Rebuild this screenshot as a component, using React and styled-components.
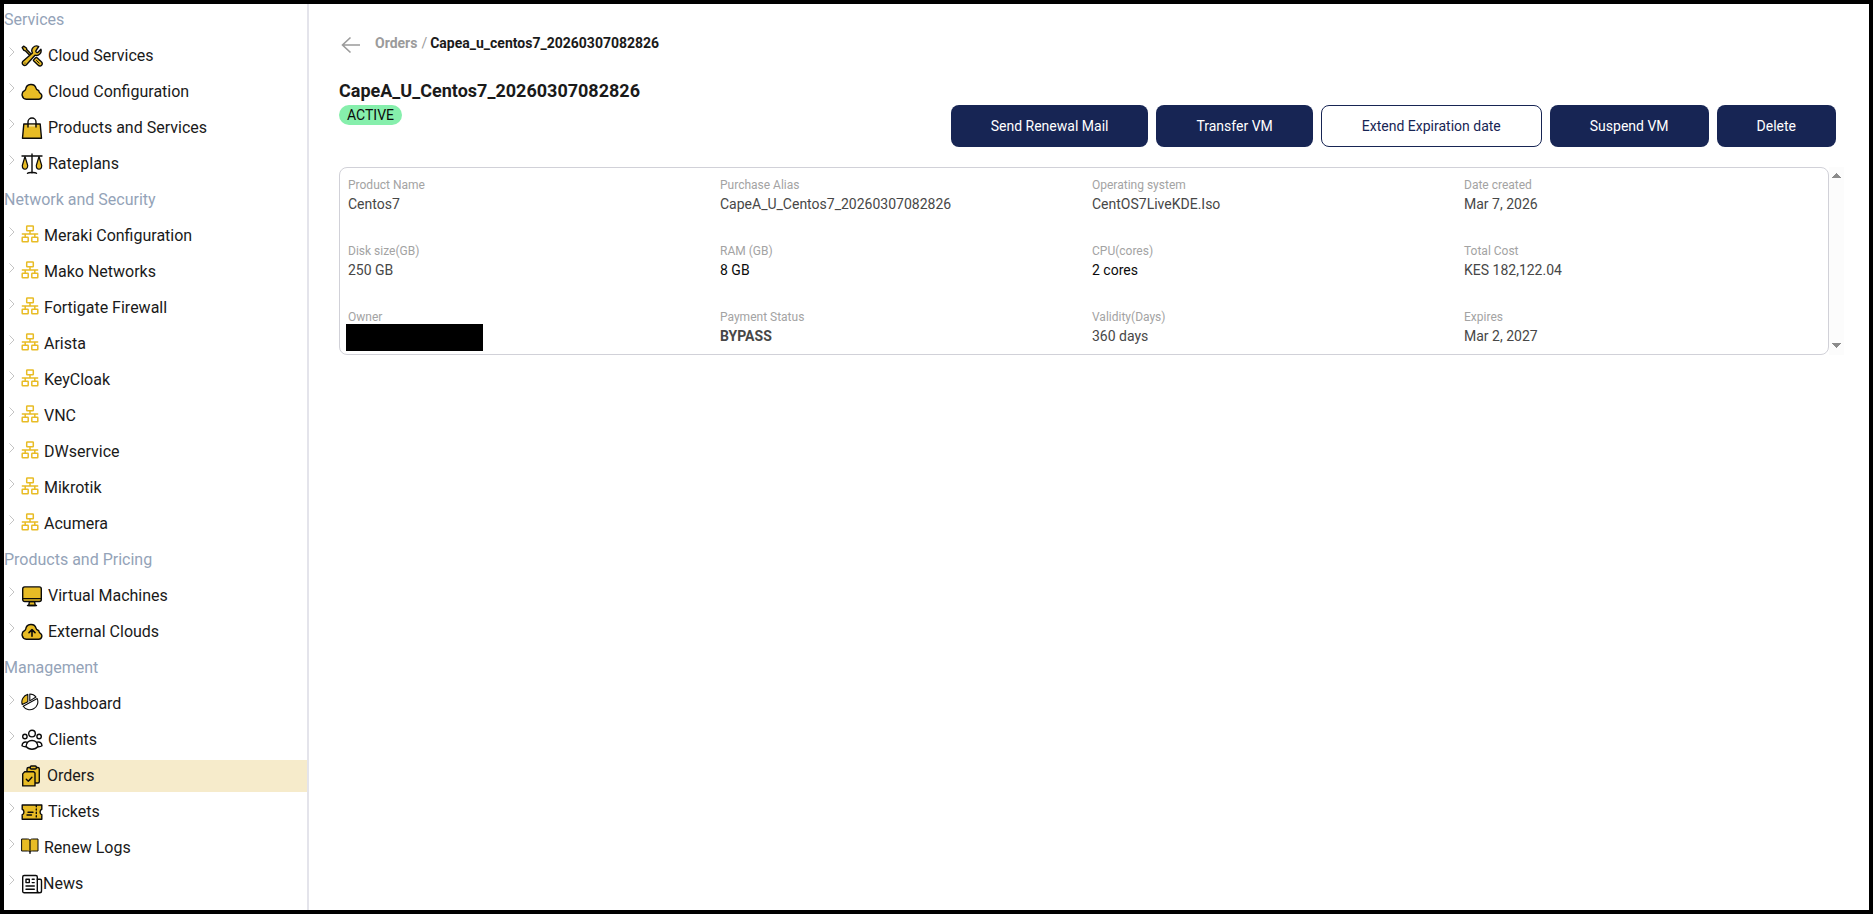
import styled, { createGlobalStyle } from 'styled-components';

const INK = '#0b0b0b';
const GOLD = '#e8bc25';

const outline = {
  stroke: INK,
  strokeWidth: 1.4,
  strokeLinecap: 'round',
  strokeLinejoin: 'round',
};

const ToolsIcon = () => (
  <Icon viewBox="0 0 22 22" $size={22}>
    <path d="M1.2 2.6 2.6 1.2 5.4 3l.3 1.5L12 11l-1.4 1.3L4.3 5.8 2.9 5.4z" fill={GOLD} {...outline} />
    <path
      d="M12.6 14.9l2-2.2c.5-.4 1-.3 1.5.1l4.2 3.9c1.2 1.1 1.3 2.6.3 3.6s-2.5.9-3.6-.2l-4.2-4.1c-.4-.4-.5-.8-.2-1.1z"
      fill={GOLD}
      {...outline}
    />
    <path
      d="M15 5.7a1 1 0 0 0 .1 1.2l.4.4a1 1 0 0 0 1.3.1L19.9 4.3A4.7 4.7 0 0 1 14 10.2L5.2 20A2.5 2.5 0 0 1 1.7 16.6L11.4 7.9A4.7 4.7 0 0 1 17.7 1.5z"
      fill={GOLD}
      {...outline}
    />
    <path d="M15.5 15.5l2.7 2.6" {...outline} strokeWidth={1} />
    <circle cx="4" cy="18" r="0.6" fill={INK} />
  </Icon>
);

const cloudPath =
  'M5.3 18.3a4.6 4.6 0 0 1-1.8-8.6C4 9.4 4.5 9.2 4.7 8.2a5.3 5.3 0 0 1 10.4-.8c.3 1.1.6 1.4 1.6 1.6.9.3 1.4 1 1.5 1.9.1.7.3.9.9 1.2a3.3 3.3 0 0 1-1.4 6.2z';

const CloudIcon = () => (
  <Icon viewBox="0 0 22 22" $size={22}>
    <path d={cloudPath} fill={GOLD} {...outline} />
  </Icon>
);

const CloudUploadIcon = () => (
  <Icon viewBox="0 0 22 22" $size={22}>
    <path d={cloudPath} fill={GOLD} {...outline} />
    <path d="M11 15.3V9M8 11.6l3-2.9 3 2.9" fill="none" {...outline} strokeWidth={1.6} />
  </Icon>
);

const BagIcon = () => (
  <Icon viewBox="0 0 22 22" $size={22}>
    <path d="M2.8 7h16.4l1.3 14.2h-19z" fill={GOLD} {...outline} />
    <path d="M7.7 7.7h6.6v1.8H7.7z" fill="#f6e3a0" />
    <path d="M7 10V5a4 4 0 0 1 8 0v5" fill="none" {...outline} />
  </Icon>
);

const ScalesIcon = () => (
  <Icon viewBox="0 0 22 22" $size={22}>
    <path d="M1 3h20M11 1v19M6.5 20.2c1-.8 2.5-.7 4.5-.7s3.5-.1 4.5.7" fill="none" {...outline} />
    <path d="M4 3.5l-2.7 9c0 2.4 1.2 3.7 2.7 3.7s2.7-1.3 2.7-3.7z" fill={GOLD} {...outline} strokeWidth={1.2} />
    <path d="M18 3.5l-2.7 9c0 2.4 1.2 3.7 2.7 3.7s2.7-1.3 2.7-3.7z" fill={GOLD} {...outline} strokeWidth={1.2} />
  </Icon>
);

const NetworkIcon = () => (
  <Icon viewBox="0 0 18 18" $size={18}>
    <g fill="none" stroke={GOLD} strokeWidth="1.5">
      <rect x="5.7" y="1" width="6.6" height="4.7" rx="0.5" />
      <rect x="1.2" y="12.3" width="6" height="4.5" rx="0.5" />
      <rect x="10.8" y="12.3" width="6" height="4.5" rx="0.5" />
      <path d="M9 5.7V9M.8 9h16.4M4.2 9v3.3M13.8 9v3.3" />
    </g>
  </Icon>
);

const MonitorIcon = () => (
  <Icon viewBox="0 0 22 22" $size={22}>
    <path d="M8.5 16.5h5l.8 4H7.7z" fill={GOLD} {...outline} />
    <rect x="1.7" y="1.9" width="18.6" height="14.6" rx="2" fill={GOLD} {...outline} />
    <path d="M1.7 13.6h18.6M6.5 20.5h9" {...outline} />
  </Icon>
);

const PieIcon = () => (
  <Icon viewBox="0 0 18 18" $size={18}>
    <g stroke={INK} strokeWidth="1.1" strokeLinejoin="round" fill="#fff">
      <path d="M6.8 1.4v7.3L1.2 11.5A8 8 0 0 1 6.8 1.4z" fill={GOLD} />
      <path d="M8.8 1a8 8 0 0 1 6.2 3L8.8 7.9z" />
      <path d="M16.2 5.600A8 8 0 0 1 2.2 13.2z" />
    </g>
  </Icon>
);

const ClientsIcon = () => (
  <Icon viewBox="0 0 22 22" $size={22}>
    <g fill="none" {...outline}>
      <circle cx="11" cy="4.6" r="3.3" />
      <circle cx="3.9" cy="7.5" r="2.2" />
      <circle cx="18.1" cy="7.5" r="2.2" />
      <path d="M5 17.5c.4-3.6 2.6-6 6-6s5.6 2.4 6 6c-1.5 1.8-3.5 2.7-6 2.7s-4.5-.9-6-2.7z" />
      <path d="M5.8 13.2c-2.7-.8-4.6.7-4.8 3.5.9.7 2 1 3.5 1M16.2 13.2c2.7-.8 4.6.7 4.8 3.5-.9.7-2 1-3.5 1" />
    </g>
  </Icon>
);

const OrdersIcon = () => (
  <Icon viewBox="0 0 21 22" $size={21}>
    <rect x="6" y="2.5" width="12.3" height="15.5" rx="1.5" fill={GOLD} {...outline} />
    <rect x="9.3" y="1" width="6" height="3" rx="1" fill={GOLD} {...outline} />
    <path d="M3.7 6.7h9L14 7.9v13H1.7v-12z" fill={GOLD} {...outline} />
    <path d="M5.3 14.2l2 2 3.6-4" fill="none" {...outline} />
  </Icon>
);

const TicketIcon = () => (
  <Icon viewBox="0 0 22 22" $size={22}>
    <path
      d="M1.2 4h19.6v4.2c-2.3.6-2.3 5 0 5.6v4.4H1.2v-4.4c2.3-.6 2.3-5 0-5.6z"
      fill={GOLD}
      {...outline}
    />
    <path d="M15.3 4.5V18" {...outline} strokeDasharray="1.2 2.2" fill="none" />
    <path d="M7 11.2h5M6 14h4.5" fill="none" {...outline} />
  </Icon>
);

const BookIcon = () => (
  <Icon viewBox="0 0 18 18" $size={18}>
    <path
      d="M1 2h5.5C8 2 9 2.6 9 3.5 9 2.6 10 2 11.5 2H17v12h-5.5c-1.5 0-2.5.5-2.5 1.3 0-.8-1-1.3-2.5-1.3H1z"
      fill={GOLD}
      {...outline}
      strokeWidth={1}
    />
    <path d="M9 3.5v13" {...outline} strokeWidth={1.2} />
  </Icon>
);

const NewsIcon = () => (
  <Icon viewBox="0 0 22 22" $size={22} $flush>
    <g fill="none" {...outline}>
      <path d="M3.2 2.5h11.6A1.5 1.5 0 0 1 16.3 4v14.5c0 1 .8 1.3 1.3 1.3H3.2a1.5 1.5 0 0 1-1.5-1.3V4a1.5 1.5 0 0 1 1.5-1.5z" />
      <path d="M16.3 6.3H19a1.5 1.5 0 0 1 1.5 1.5V18c0 2.4-3.6 2.4-4 0" />
      <path d="M5 6.3h3.3v3.3H5zM11.2 6.3h2M11.2 9.6h2M5 13h8.3M5 16.2h8.3" />
    </g>
  </Icon>
);

const menu = [
  {
    title: 'Services',
    items: [
      { name: 'Cloud Services', icon: ToolsIcon },
      { name: 'Cloud Configuration', icon: CloudIcon },
      { name: 'Products and Services', icon: BagIcon },
      { name: 'Rateplans', icon: ScalesIcon },
    ],
  },
  {
    title: 'Network and Security',
    items: [
      { name: 'Meraki Configuration', icon: NetworkIcon },
      { name: 'Mako Networks', icon: NetworkIcon },
      { name: 'Fortigate Firewall', icon: NetworkIcon },
      { name: 'Arista', icon: NetworkIcon },
      { name: 'KeyCloak', icon: NetworkIcon },
      { name: 'VNC', icon: NetworkIcon },
      { name: 'DWservice', icon: NetworkIcon },
      { name: 'Mikrotik', icon: NetworkIcon },
      { name: 'Acumera', icon: NetworkIcon },
    ],
  },
  {
    title: 'Products and Pricing',
    items: [
      { name: 'Virtual Machines', icon: MonitorIcon },
      { name: 'External Clouds', icon: CloudUploadIcon },
    ],
  },
  {
    title: 'Management',
    items: [
      { name: 'Dashboard', icon: PieIcon },
      { name: 'Clients', icon: ClientsIcon },
      { name: 'Orders', icon: OrdersIcon, active: true },
      { name: 'Tickets', icon: TicketIcon },
      { name: 'Renew Logs', icon: BookIcon },
      { name: 'News', icon: NewsIcon },
    ],
  },
];

const details = [
  { label: 'Product Name', value: 'Centos7' },
  { label: 'Purchase Alias', value: 'CapeA_U_Centos7_20260307082826' },
  { label: 'Operating system', value: 'CentOS7LiveKDE.Iso' },
  { label: 'Date created', value: 'Mar 7, 2026' },
  { label: 'Disk size(GB)', value: '250 GB' },
  { label: 'RAM (GB)', value: '8 GB', dark: true },
  { label: 'CPU(cores)', value: '2 cores', dark: true },
  { label: 'Total Cost', value: 'KES 182,122.04' },
  { label: 'Owner', hidden: true },
  { label: 'Payment Status', value: 'BYPASS', bold: true },
  { label: 'Validity(Days)', value: '360 days' },
  { label: 'Expires', value: 'Mar 2, 2027' },
];

const Sidebar = () => (
  <Aside>
    <nav>
      {menu.map((section) => (
        <section key={section.title}>
          <SectionTitle>{section.title}</SectionTitle>
          {section.items.map(({ name, icon: ItemIcon, active }) => (
            <NavItem key={name} href="#" $active={active}>
              <Chevron viewBox="0 0 8 12">
                {!active && <path d="M1.5 1.5 6 6l-4.5 4.5" />}
              </Chevron>
              <ItemIcon />
              {name}
            </NavItem>
          ))}
        </section>
      ))}
    </nav>
  </Aside>
);

const Details = () => (
  <DetailsWrap>
    <Card>
      {details.map(({ label, value, dark, bold, hidden }) => (
        <div key={label}>
          <Term>{label}</Term>
          {hidden ? (
            <Redacted />
          ) : (
            <Value $dark={dark} $bold={bold}>
              {value}
            </Value>
          )}
        </div>
      ))}
    </Card>
    <ScrollTrack>
      <svg width="9" height="5" viewBox="0 0 9 5">
        <path d="M0 5 4.5 0 9 5z" />
      </svg>
      <svg width="9" height="5" viewBox="0 0 9 5">
        <path d="M0 0h9L4.5 5z" />
      </svg>
    </ScrollTrack>
  </DetailsWrap>
);

export default function App() {
  return (
    <>
      <GlobalStyle />
      <Page>
        <Sidebar />
        <Main>
          <Breadcrumb>
            <BackButton type="button" aria-label="Back">
              <svg width="20" height="18" viewBox="0 0 20 18">
                <path d="M9.5 1.5 1.5 9l8 7.5M1.5 9H19" />
              </svg>
            </BackButton>
            <Crumb href="#">Orders</Crumb>
            <Slash>/</Slash>
            <Current>Capea_u_centos7_20260307082826</Current>
          </Breadcrumb>

          <Title>CapeA_U_Centos7_20260307082826</Title>
          <Toolbar>
            <Badge>ACTIVE</Badge>
            <Actions>
              <Button type="button">Send Renewal Mail</Button>
              <Button type="button">Transfer VM</Button>
              <Button type="button" $outlined>
                Extend Expiration date
              </Button>
              <Button type="button">Suspend VM</Button>
              <Button type="button">Delete</Button>
            </Actions>
          </Toolbar>
          <Details />
        </Main>
      </Page>
    </>
  );
}

const GlobalStyle = createGlobalStyle`
  * {
    box-sizing: border-box;
  }
  body {
    margin: 0;
    font-family: Roboto, 'Liberation Sans', sans-serif;
    font-size: 14px;
    line-height: 20px;
    color: #1a1a1a;
    background: #ffffff;
  }
`;
const Page = styled.div`
  display: flex;
  min-height: 100vh;
  border: 4px solid #000000;
`;
const Aside = styled.aside`
  flex: none;
  width: 305px;
  border-right: 2px solid #e4e4eb;
`;
const SectionTitle = styled.h2`
  margin: 0 0 4px;
  font-size: 16px;
  font-weight: 400;
  line-height: 32px;
  color: #94a3b8;
`;
const NavItem = styled.a`
  display: flex;
  align-items: center;
  height: 32px;
  margin-bottom: 4px;
  padding-left: 4px;
  font-size: 16px;
  color: #1a1a1a;
  text-decoration: none;
  background-color: ${({ $active }) => ($active ? '#f6ebcb' : 'transparent')};
`;
const Chevron = styled.svg`
  flex: none;
  width: 8px;
  height: 12px;
  margin: 0 5px 8px 0;
  fill: none;
  stroke: #c4c4c4;
`;
const Icon = styled.svg`
  flex: none;
  width: ${({ $size }) => $size}px;
  height: ${({ $size }) => ($size > 18 ? 22 : 18)}px;
  margin-right: ${({ $flush }) => ($flush ? 0 : 5)}px;
  margin-bottom: ${({ $size }) => ($size > 18 ? 0 : 4)}px;
`;
const Main = styled.main`
  flex: 1;
  min-width: 0;
  padding: 28px 25px 28px 30px;
`;
const Breadcrumb = styled.div`
  display: flex;
  align-items: center;
  height: 22px;
`;
const BackButton = styled.button`
  display: flex;
  margin: 4px 14px 0 0;
  padding: 0 0 0 2px;
  border: none;
  background: none;
  cursor: pointer;

  svg {
    fill: none;
    stroke: #9b9b9b;
    stroke-width: 1.6;
  }
`;
const Crumb = styled.a`
  font-weight: 700;
  color: #9b9b9b;
  text-decoration: none;
`;
const Slash = styled.span`
  margin: 0 3px 0 4px;
  color: #9b9b9b;
`;
const Current = styled.span`
  font-weight: 700;
`;
const Title = styled.h1`
  margin: 23px 0 0;
  font-size: 18px;
  font-weight: 700;
  line-height: 28px;
`;
const Toolbar = styled.div`
  display: flex;
  justify-content: space-between;
  align-items: flex-start;
  margin: 0 8px 20px 0;
`;
const Badge = styled.span`
  padding: 0 8px;
  border-radius: 10px;
  color: #0b0b0b;
  background-color: #86efac;
`;
const Actions = styled.div`
  display: flex;
  gap: 8px;
`;
const Button = styled.button`
  height: 42px;
  padding: 0 40px;
  border: ${({ $outlined }) => ($outlined ? '1px solid #172554' : 'none')};
  border-radius: 8px;
  font: inherit;
  color: ${({ $outlined }) => ($outlined ? '#172554' : '#ffffff')};
  background-color: ${({ $outlined }) => ($outlined ? '#ffffff' : '#172554')};
  cursor: pointer;
`;
const DetailsWrap = styled.div`
  display: flex;
`;
const Card = styled.dl`
  flex: 1;
  display: grid;
  grid-template-columns: repeat(4, 1fr);
  row-gap: 28px;
  margin: 0;
  padding: 8px 0;
  border: 1px solid #d1d1d8;
  border-radius: 8px;

  > div {
    padding-left: 8px;
  }
`;
const Term = styled.dt`
  font-size: 12px;
  line-height: 18px;
  color: #a3a3a3;
`;
const Value = styled.dd`
  margin: 0;
  font-weight: ${({ $bold }) => ($bold ? 700 : 400)};
  color: ${({ $dark }) => ($dark ? '#0b0b0b' : '#474747')};
`;
const Redacted = styled.dd`
  width: 137px;
  height: 27px;
  margin: -2px 0 -5px -2px;
  background-color: #000000;
`;
const ScrollTrack = styled.div`
  display: flex;
  flex-direction: column;
  justify-content: space-between;
  align-items: center;
  width: 15px;
  padding: 6px 0 7px;
  background-color: #fcfcfc;

  svg {
    fill: #8b8b8b;
    shape-rendering: crispEdges;
  }
`;
